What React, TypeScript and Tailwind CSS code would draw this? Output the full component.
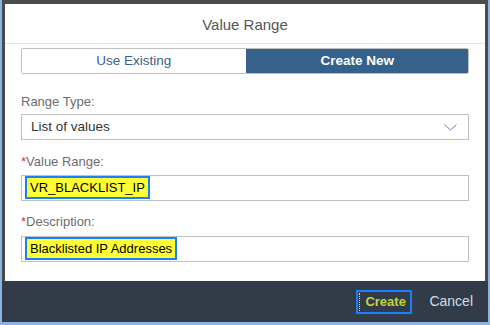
function FieldLabel({ text, required }: { text: string; required?: boolean }) {
  return (
    <div className="text-[13px] leading-[16px] text-[#6a6d70]">
      {required && <span className="text-[#d0392e]">*</span>}
      {text}
    </div>
  )
}

function Highlight({ children }: { children: string }) {
  return (
    <span className="border-2 border-[#1a7fff] bg-[#ffff33] px-[3px] text-[13px] leading-[19px] text-black">
      {children}
    </span>
  )
}

export default function App() {
  return (
    <div
      className="flex h-[325px] w-[490px] flex-col bg-[#8ab5e3] px-[2px] pb-[3px]"
      style={{ fontFamily: '"Liberation Sans", Arial, sans-serif' }}
    >
      <div className="flex flex-1 flex-col bg-[#4b4b4b] px-[3px] pt-[4px]">
        <div className="flex flex-1 flex-col bg-white">
          <div className="flex h-[40px] items-center justify-center border-b border-[#e6e6e6] pt-[4px] text-[15px] text-[#555]">
            Value Range
          </div>

          <div className="flex flex-col px-4 pt-[4px]">
            <div className="flex h-[26px] overflow-hidden rounded-[2px] border border-[#bfbfbf] text-[13.5px]">
              <div className="flex flex-1 items-center justify-center bg-white text-[#3c6088]">
                Use Existing
              </div>
              <div className="-my-px -mr-px flex flex-1 items-center justify-center rounded-r-[2px] bg-[#35618b] font-bold text-white">
                Create New
              </div>
            </div>

            <div className="mt-[20px] mb-[4px]">
              <FieldLabel text="Range Type:" />
            </div>
            <div className="flex h-[26px] items-center justify-between border border-[#bfbfbf] pl-[9px] pr-[11px] text-[13.5px] text-[#333]">
              <span>List of values</span>
              <svg width="13" height="7" viewBox="0 0 13 7" fill="none">
                <polyline points="0.5,0.5 6.5,6 12.5,0.5" stroke="#5b82ad" strokeWidth="1" />
              </svg>
            </div>

            <div className="mt-[14px] mb-[5px]">
              <FieldLabel text="Value Range:" required />
            </div>
            <div className="flex h-[26px] items-start border border-[#bfbfbf] pl-[3px]">
              <Highlight>VR_BLACKLIST_IP</Highlight>
            </div>

            <div className="mt-[13px] mb-[6px]">
              <FieldLabel text="Description:" required />
            </div>
            <div className="flex h-[26px] items-start border border-[#bfbfbf] pl-[3px]">
              <Highlight>Blacklisted IP Addresses</Highlight>
            </div>
          </div>
        </div>
      </div>

      <div className="flex h-[41px] items-center justify-end gap-[17px] bg-[#313c48] pr-[15px]">
        <div className="flex h-[24px] w-[56px] items-center border-2 border-[#1a7fff]">
          <div className="ml-px h-[18px] border-l border-dotted border-[#e8e85a]" />
          <span className="ml-[5px] text-[13px] font-bold text-[#c3d53c]">Create</span>
        </div>
        <span className="text-[14px] text-[#d5dde6]">Cancel</span>
      </div>
    </div>
  )
}
